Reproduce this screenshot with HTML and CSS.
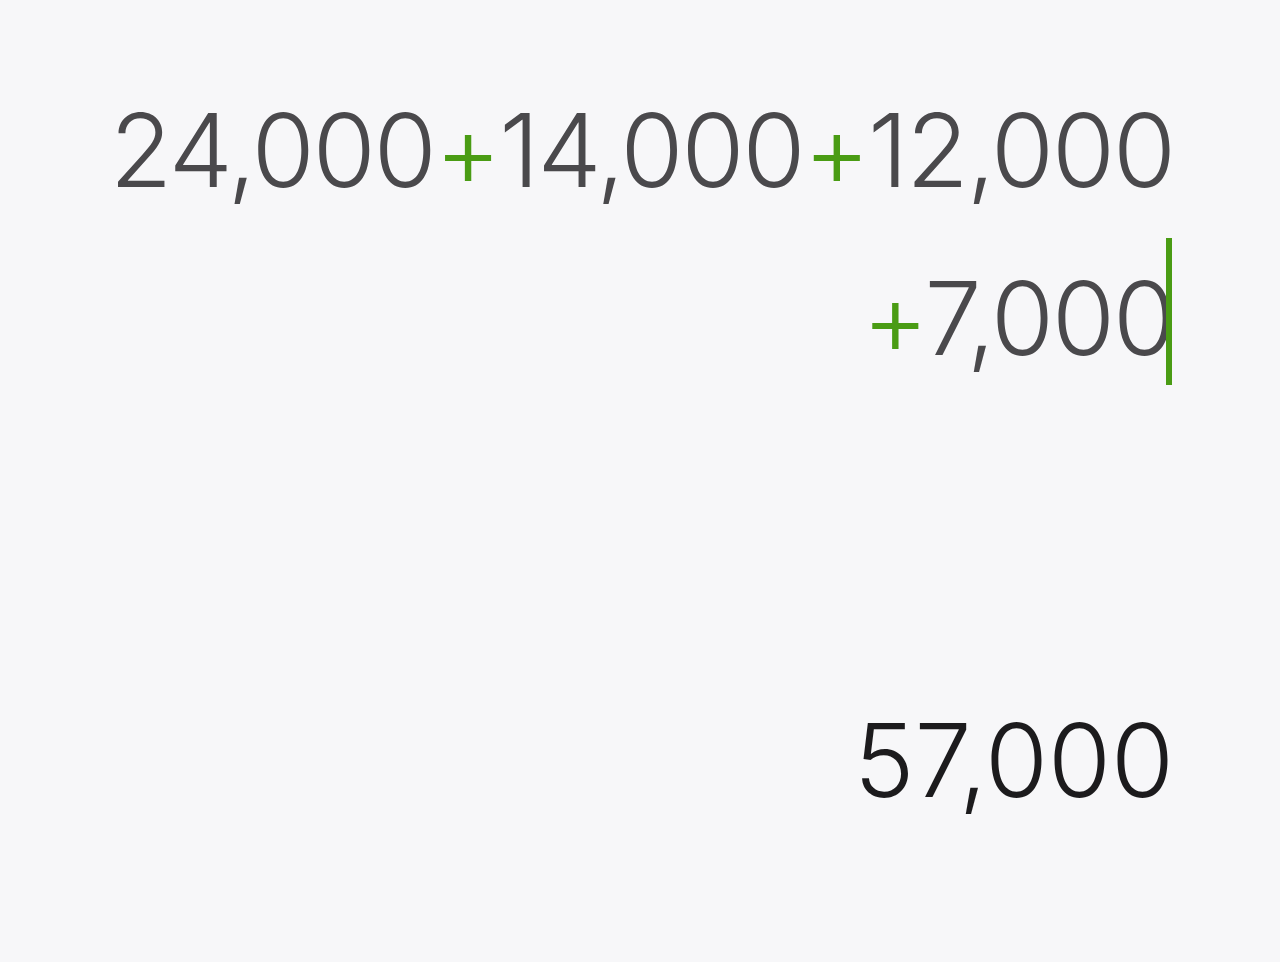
FILE: index.html
```html
<!DOCTYPE html>
<html lang="en">
<head>
  <meta charset="UTF-8">
  <meta name="viewport" content="width=device-width, initial-scale=1.0">
  <title>Calculator</title>
  <link rel="stylesheet" href="styles.css">
</head>
<body>
  <main class="display">
    <div class="expression">
      <div class="line">24,000<span class="op">+</span>14,000<span class="op">+</span>12,000</div>
      <div class="line"><span class="op">+</span>7,000<span class="cursor"></span></div>
    </div>
    <div class="result">57,000</div>
  </main>
</body>
</html>
```

FILE: styles.css
```css
body {
  margin: 0;
  background-color: #f7f7f9;
  font-family: Inter, "Noto Sans", sans-serif;
}

.display {
  height: 962px;
  box-sizing: border-box;
  padding: 66px 106px 0 0;
  display: flex;
  flex-direction: column;
  align-items: flex-end;
}

.expression {
  display: flex;
  flex-direction: column;
  align-items: flex-end;
  color: #4a494c;
  font-size: 102px;
  font-weight: 300;
  line-height: 168px;
  letter-spacing: -2px;
}

.line {
  height: 168px;
  white-space: nowrap;
}

.op {
  color: #4a9c14;
}

.cursor {
  display: inline-block;
  width: 6px;
  height: 147px;
  margin-left: -8px;
  margin-right: 2px;
  background-color: #4a9c14;
  vertical-align: -30px;
}

.result {
  margin-top: 274px;
  color: #1c1b1d;
  font-size: 102px;
  font-weight: 300;
  line-height: 168px;
}
```
